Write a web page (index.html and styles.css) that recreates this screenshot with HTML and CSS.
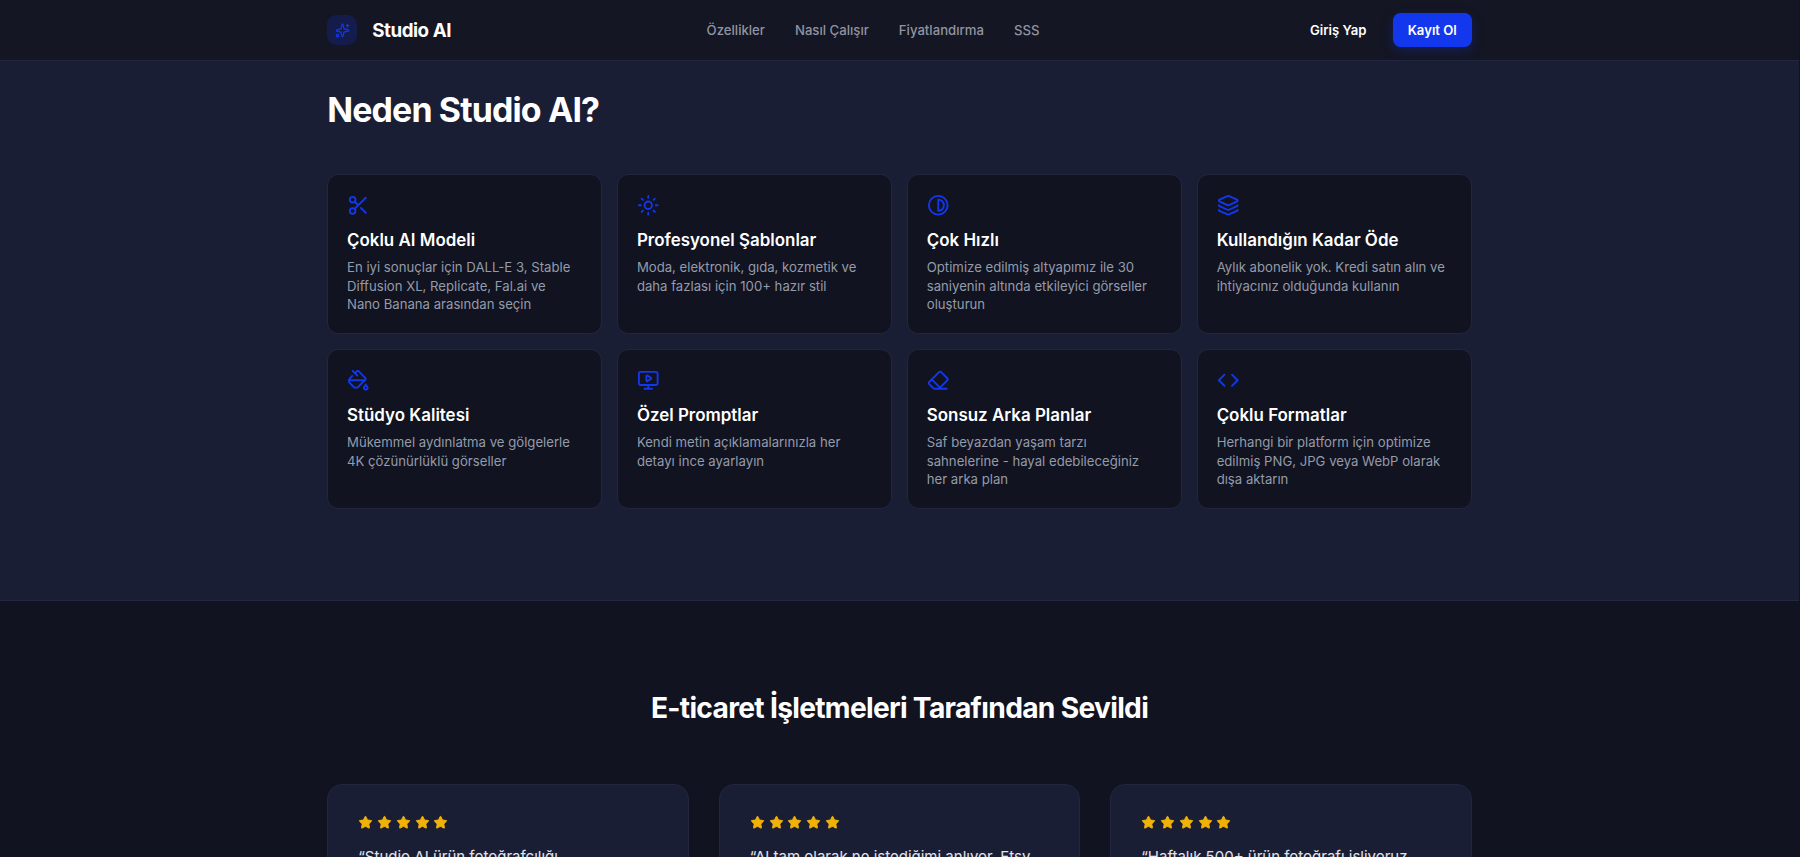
FILE: index.html
```html
<!DOCTYPE html>
<html lang="tr">
<head>
<meta charset="UTF-8" />
<meta name="viewport" content="width=device-width, initial-scale=1.0" />
<title>Studio AI</title>
<link rel="stylesheet" href="styles.css">
</head>
<body>
<svg class="sprite">
  <symbol id="star" viewBox="0 0 24 24">
    <path d="M11.525 2.295a.53.53 0 0 1 .95 0l2.31 4.679a2.123 2.123 0 0 0 1.595 1.16l5.166.756a.53.53 0 0 1 .294.904l-3.736 3.638a2.123 2.123 0 0 0-.611 1.878l.882 5.14a.53.53 0 0 1-.771.56l-4.618-2.428a2.122 2.122 0 0 0-1.973 0L6.396 21.01a.53.53 0 0 1-.77-.56l.881-5.139a2.122 2.122 0 0 0-.611-1.879L2.16 9.795a.53.53 0 0 1 .294-.906l5.165-.755a2.122 2.122 0 0 0 1.597-1.16z"/>
  </symbol>
</svg>

<header class="header">
  <div class="container header-inner">
    <a class="brand">
      <span class="brand-icon">
        <svg class="icon" viewBox="0 0 24 24">
          <path d="M11.017 2.814a1 1 0 0 1 1.966 0l1.051 5.558a2 2 0 0 0 1.594 1.594l5.558 1.051a1 1 0 0 1 0 1.966l-5.558 1.051a2 2 0 0 0-1.594 1.594l-1.051 5.558a1 1 0 0 1-1.966 0l-1.051-5.558a2 2 0 0 0-1.594-1.594l-5.558-1.051a1 1 0 0 1 0-1.966l5.558-1.051a2 2 0 0 0 1.594-1.594z"/>
          <path d="M20 2v4M22 4h-4"/>
          <circle cx="4" cy="20" r="2"/>
        </svg>
      </span>
      <span class="brand-name">Studio AI</span>
    </a>
    <nav class="nav">
      <a>Özellikler</a>
      <a>Nasıl Çalışır</a>
      <a>Fiyatlandırma</a>
      <a>SSS</a>
    </nav>
    <div class="actions">
      <a class="btn">Giriş Yap</a>
      <a class="btn btn-primary">Kayıt Ol</a>
    </div>
  </div>
</header>

<section class="features">
  <div class="container">
    <h2 class="features-title">Neden Studio AI?</h2>
    <div class="feature-grid">
      <div class="feature">
        <svg class="icon" viewBox="0 0 24 24">
          <circle cx="6" cy="6" r="3"/>
          <path d="M8.12 8.12 12 12M20 4 8.12 15.88"/>
          <circle cx="6" cy="18" r="3"/>
          <path d="M14.8 14.8 20 20"/>
        </svg>
        <div>
          <h3>Çoklu AI Modeli</h3>
          <p>En iyi sonuçlar için DALL-E 3, Stable Diffusion XL, Replicate, Fal.ai ve Nano Banana arasından seçin</p>
        </div>
      </div>
      <div class="feature">
        <svg class="icon" viewBox="0 0 24 24">
          <circle cx="12" cy="12" r="4"/>
          <path d="M12 2v2M12 20v2M4.93 4.93l1.41 1.41M17.66 17.66l1.41 1.41M2 12h2M20 12h2M6.34 17.66l-1.41 1.41M19.07 4.93l-1.41 1.41"/>
        </svg>
        <div>
          <h3>Profesyonel Şablonlar</h3>
          <p>Moda, elektronik, gıda, kozmetik ve daha fazlası için 100+ hazır stil</p>
        </div>
      </div>
      <div class="feature">
        <svg class="icon" viewBox="0 0 24 24">
          <circle cx="12" cy="12" r="10"/>
          <path d="M12 18a6 6 0 0 0 0-12v12z"/>
        </svg>
        <div>
          <h3>Çok Hızlı</h3>
          <p>Optimize edilmiş altyapımız ile 30 saniyenin altında etkileyici görseller oluşturun</p>
        </div>
      </div>
      <div class="feature">
        <svg class="icon" viewBox="0 0 24 24">
          <path d="M12.83 2.18a2 2 0 0 0-1.66 0L2.6 6.08a1 1 0 0 0 0 1.83l8.58 3.91a2 2 0 0 0 1.66 0l8.58-3.9a1 1 0 0 0 0-1.83z"/>
          <path d="M2 12a1 1 0 0 0 .58.91l8.6 3.91a2 2 0 0 0 1.65 0l8.58-3.9A1 1 0 0 0 22 12"/>
          <path d="M2 17a1 1 0 0 0 .58.91l8.6 3.91a2 2 0 0 0 1.65 0l8.58-3.9A1 1 0 0 0 22 17"/>
        </svg>
        <div>
          <h3>Kullandığın Kadar Öde</h3>
          <p>Aylık abonelik yok. Kredi satın alın ve ihtiyacınız olduğunda kullanın</p>
        </div>
      </div>
      <div class="feature">
        <svg class="icon" viewBox="0 0 24 24">
          <path d="M11 7 6 2M18.992 12H2.041"/>
          <path d="M21.145 18.38A3.34 3.34 0 0 1 20 16.5a3.3 3.3 0 0 1-1.145 1.88c-.575.46-.855 1.02-.855 1.595A2 2 0 0 0 20 22a2 2 0 0 0 2-2.025c0-.58-.285-1.13-.855-1.595"/>
          <path d="m8.5 4.5 2.148-2.148a1.205 1.205 0 0 1 1.704 0l7.296 7.296a1.205 1.205 0 0 1 0 1.704l-7.592 7.592a3.615 3.615 0 0 1-5.112 0l-3.888-3.888a3.615 3.615 0 0 1 0-5.112L5.67 7.33"/>
        </svg>
        <div>
          <h3>Stüdyo Kalitesi</h3>
          <p>Mükemmel aydınlatma ve gölgelerle 4K çözünürlüklü görseller</p>
        </div>
      </div>
      <div class="feature">
        <svg class="icon" viewBox="0 0 24 24">
          <path d="M10 7.75a.75.75 0 0 1 1.142-.638l3.664 2.249a.75.75 0 0 1 0 1.278l-3.664 2.25a.75.75 0 0 1-1.142-.64z"/>
          <path d="M12 17v4M8 21h8"/>
          <rect x="2" y="3" width="20" height="14" rx="2"/>
        </svg>
        <div>
          <h3>Özel Promptlar</h3>
          <p>Kendi metin açıklamalarınızla her detayı ince ayarlayın</p>
        </div>
      </div>
      <div class="feature">
        <svg class="icon" viewBox="0 0 24 24">
          <path d="M21 21H8a2 2 0 0 1-1.42-.587l-3.994-3.999a2 2 0 0 1 0-2.828l10-10a2 2 0 0 1 2.829 0l5.999 6a2 2 0 0 1 0 2.828L12.834 21"/>
          <path d="m5.082 11.09 8.828 8.828"/>
        </svg>
        <div>
          <h3>Sonsuz Arka Planlar</h3>
          <p>Saf beyazdan yaşam tarzı sahnelerine - hayal edebileceğiniz her arka plan</p>
        </div>
      </div>
      <div class="feature">
        <svg class="icon" viewBox="0 0 24 24">
          <path d="m16 18 6-6-6-6M8 6l-6 6 6 6"/>
        </svg>
        <div>
          <h3>Çoklu Formatlar</h3>
          <p>Herhangi bir platform için optimize edilmiş PNG, JPG veya WebP olarak dışa aktarın</p>
        </div>
      </div>
    </div>
  </div>
</section>

<section class="testimonials">
  <div class="container">
    <h2 class="testimonials-title">E-ticaret İşletmeleri Tarafından Sevildi</h2>
    <div class="testimonial-grid">
      <div class="testimonial">
        <div class="stars">
          <svg><use href="#star"/></svg><svg><use href="#star"/></svg><svg><use href="#star"/></svg><svg><use href="#star"/></svg><svg><use href="#star"/></svg>
        </div>
        <p>“Studio AI ürün fotoğrafçılığı</p>
      </div>
      <div class="testimonial">
        <div class="stars">
          <svg><use href="#star"/></svg><svg><use href="#star"/></svg><svg><use href="#star"/></svg><svg><use href="#star"/></svg><svg><use href="#star"/></svg>
        </div>
        <p>“AI tam olarak ne istediğimi anlıyor. Etsy</p>
      </div>
      <div class="testimonial">
        <div class="stars">
          <svg><use href="#star"/></svg><svg><use href="#star"/></svg><svg><use href="#star"/></svg><svg><use href="#star"/></svg><svg><use href="#star"/></svg>
        </div>
        <p>“Haftalık 500+ ürün fotoğrafı işliyoruz.</p>
      </div>
    </div>
  </div>
</section>
</body>
</html>
```
FILE: styles.css
```css
html {
  font-size: 15px;
  background: #111320;
}
* {
  box-sizing: border-box;
}
body {
  margin: 0;
  width: 1799px;
  height: 100vh;
  overflow: hidden;
  font-family: Inter, "Liberation Sans", sans-serif;
  background: #111320;
  color: #fff;
}
h2, h3, p {
  margin: 0;
}
.sprite {
  display: none;
}
.container {
  width: 1144.5px;
  margin: 0 auto;
}
.icon {
  display: block;
  width: 1.5rem;
  height: 1.5rem;
  fill: none;
  stroke: #1337ec;
  stroke-width: 2;
  stroke-linecap: round;
  stroke-linejoin: round;
}

.header {
  background: #141623;
  border-bottom: 1px solid #23263f;
}
.header-inner {
  display: flex;
  align-items: center;
  justify-content: space-between;
  height: 4rem;
}
.brand {
  display: flex;
  align-items: center;
  gap: 1rem;
}
.brand-icon {
  display: flex;
  align-items: center;
  justify-content: center;
  width: 2rem;
  height: 2rem;
  border-radius: 0.6rem;
  background: #141c4b;
}
.brand-icon .icon {
  width: 1rem;
  height: 1rem;
}
.brand-name {
  font-size: 1.25rem;
  font-weight: 700;
  letter-spacing: -0.025em;
}
.nav {
  display: flex;
  gap: 2rem;
  font-size: 0.878rem;
  font-weight: 500;
  color: #9293a0;
}
.actions {
  display: flex;
  gap: 0.75rem;
}
.btn {
  display: flex;
  align-items: center;
  height: 2.25rem;
  padding: 0 1rem;
  border-radius: 0.5rem;
  font-size: 0.875rem;
  font-weight: 600;
}
.btn-primary {
  background: #1337ec;
  box-shadow: 0 4px 12px rgba(19, 55, 236, 0.25);
}

.features {
  padding: 30.4px 0 6.1rem;
  background: #1a1e34;
  border-bottom: 1px solid #23263f;
}
.features-title {
  margin-bottom: 3rem;
  font-size: 2.26rem;
  line-height: 2.5rem;
  letter-spacing: -0.025em;
}
.feature-grid {
  display: grid;
  grid-template-columns: repeat(4, 1fr);
  gap: 1rem;
}
.feature {
  display: flex;
  flex-direction: column;
  gap: 0.75rem;
  padding: 1.25rem;
  background: #111320;
  border: 1px solid #23263f;
  border-radius: 0.75rem;
}
.feature h3 {
  margin-bottom: 0.28rem;
  font-size: 1.13rem;
  line-height: 1.75rem;
  font-weight: 600;
}
.feature p {
  padding-right: 3px;
  font-size: 0.878rem;
  line-height: 1.25rem;
  color: #949baa;
}

.testimonials {
  padding: 6.05rem 0;
}
.testimonials-title {
  margin-bottom: 3.9rem;
  font-size: 1.88rem;
  line-height: 2.25rem;
  letter-spacing: -0.025em;
  text-align: center;
}
.testimonial-grid {
  display: grid;
  grid-template-columns: repeat(3, 1fr);
  gap: 2rem;
}
.testimonial {
  padding: 2rem;
  background: #1a1e34;
  border: 1px solid #23263f;
  border-radius: 1rem;
}
.stars {
  display: flex;
  gap: 0.25rem;
  margin-bottom: 1rem;
}
.stars svg {
  width: 1rem;
  height: 1rem;
  fill: #f0b206;
  stroke: #f0b206;
  stroke-width: 1.5;
}
.testimonial p {
  font-size: 1rem;
  line-height: 1.625;
  color: #e2e3ea;
}
```
